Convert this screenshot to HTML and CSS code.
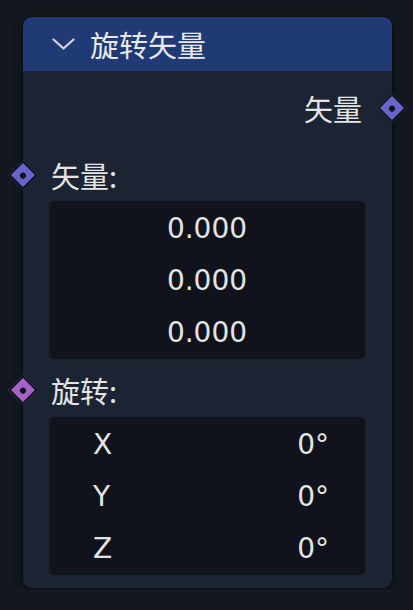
FILE: index.html
```html
<!DOCTYPE html>
<html lang="zh">
<head>
    <meta charset="UTF-8">
    <title>旋转矢量</title>
    <link rel="stylesheet" href="styles.css">
</head>
<body>

    <div class="node">
        <div class="node-header">
            <svg class="chevron" width="23" height="12" viewBox="0 0 23 12">
                <polyline points="1.5,1.5 11.5,10.5 21.5,1.5" fill="none" stroke="#d4d7dd" stroke-width="2.2" stroke-linecap="round" stroke-linejoin="round"/>
            </svg>
            <span class="node-title">旋转矢量</span>
        </div>

        <div class="output-row">
            <span class="socket-label">矢量</span>
            <span class="socket socket-vector socket-out"></span>
        </div>

        <div class="input-label">
            <span class="socket socket-vector socket-in"></span>
            <span class="socket-label">矢量:</span>
        </div>
        <div class="field">
            <div class="field-row center">0.000</div>
            <div class="field-row center">0.000</div>
            <div class="field-row center">0.000</div>
        </div>

        <div class="input-label second">
            <span class="socket socket-rotation socket-in"></span>
            <span class="socket-label">旋转:</span>
        </div>
        <div class="field">
            <div class="field-row"><span>X</span><span>0°</span></div>
            <div class="field-row"><span>Y</span><span>0°</span></div>
            <div class="field-row"><span>Z</span><span>0°</span></div>
        </div>
    </div>

</body>
</html>
```

FILE: styles.css
```css
/* page */
body {
    margin: 0;
    background-color: #131820;
    font-family: "DejaVu Sans", "Noto Sans CJK SC", sans-serif;
    color: #e4e4e4;
}

.node {
    position: relative;
    width: 369px;
    margin: 16px 0 0 22px;
    padding-bottom: 13px;
    background-color: #1c2433;
    border: 1px solid #0b0e13;
    border-radius: 10px;
    box-shadow: 0 2px 10px rgba(0, 0, 0, 0.45);
}

.node-header {
    display: flex;
    align-items: center;
    height: 54px;
    padding-left: 29px;
    background-color: #1f3a75;
    border-radius: 9px 9px 0 0;
}

.chevron {
    margin-right: 15px;
}

.node-title {
    font-family: "Noto Sans CJK SC", sans-serif;
    font-size: 29px;
    color: #e8e8e8;
}

.socket-label {
    font-family: "Noto Sans CJK SC", sans-serif;
    font-size: 29px;
}

.output-row {
    position: relative;
    display: flex;
    justify-content: flex-end;
    align-items: center;
    height: 74px;
    padding-right: 30px;
}

.input-label {
    position: relative;
    display: flex;
    align-items: center;
    height: 52px;
    margin-top: 4px;
    padding-left: 28px;
}

.input-label.second {
    height: 54px;
    margin-top: 4px;
}

/* sockets sit on the node edge */
.socket {
    position: absolute;
    top: 50%;
    width: 17px;
    height: 17px;
    border: 2px solid #10131a;
    transform: translate(-50%, -50%) rotate(45deg);
}

.socket::after {
    content: "";
    position: absolute;
    left: 50%;
    top: 50%;
    width: 6px;
    height: 6px;
    margin: -3px 0 0 -3px;
    border-radius: 50%;
    background-color: #10131a;
}

.socket-in {
    left: 0;
}

.socket-out {
    left: 100%;
}

.socket-vector {
    background-color: #6a63cb;
}

.socket-rotation {
    background-color: #a462c9;
}

.field {
    display: flex;
    flex-direction: column;
    margin: 0 27px 0 26px;
    height: 158px;
    padding: 1px 0;
    box-sizing: border-box;
    background-color: #10131b;
    border-radius: 5px;
}

.field-row {
    display: flex;
    justify-content: space-between;
    align-items: center;
    height: 52px;
    padding: 0 36px 0 44px;
    font-size: 28px;
}

.field-row.center {
    justify-content: center;
    padding: 0;
}
```
